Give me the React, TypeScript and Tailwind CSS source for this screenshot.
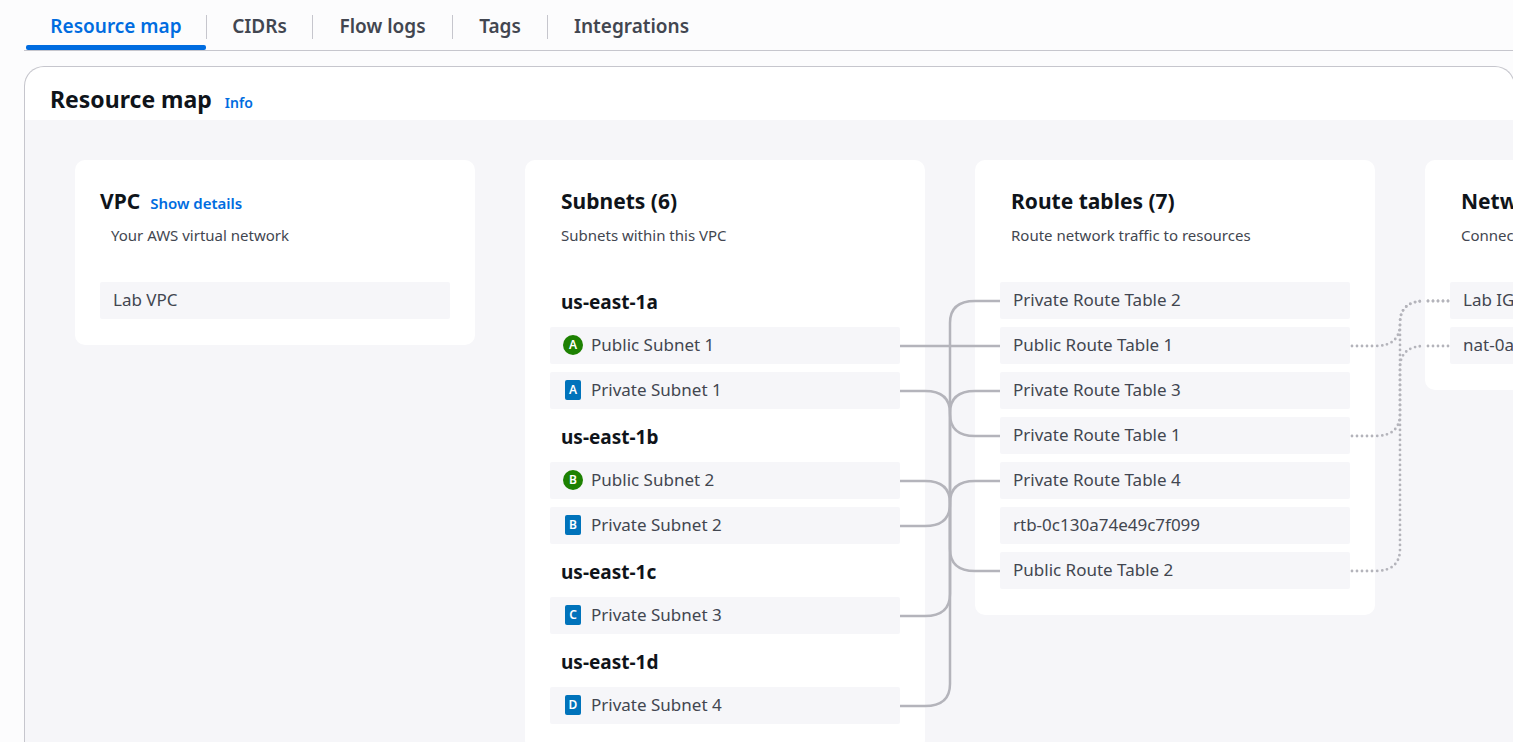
import type { ReactNode } from "react";

const tabs = [
  { label: "Resource map", width: "w-[181px]" },
  { label: "CIDRs", width: "w-[106px]" },
  { label: "Flow logs", width: "w-[140px]" },
  { label: "Tags", width: "w-[95px]" },
  { label: "Integrations", width: "w-[167px]" },
];

const zones = [
  {
    name: "us-east-1a",
    letter: "A",
    subnets: [
      { name: "Public Subnet 1", open: true },
      { name: "Private Subnet 1", open: false },
    ],
  },
  {
    name: "us-east-1b",
    letter: "B",
    subnets: [
      { name: "Public Subnet 2", open: true },
      { name: "Private Subnet 2", open: false },
    ],
  },
  { name: "us-east-1c", letter: "C", subnets: [{ name: "Private Subnet 3", open: false }] },
  { name: "us-east-1d", letter: "D", subnets: [{ name: "Private Subnet 4", open: false }] },
];

const routeTables = [
  "Private Route Table 2",
  "Public Route Table 1",
  "Private Route Table 3",
  "Private Route Table 1",
  "Private Route Table 4",
  "rtb-0c130a74e49c7f099",
  "Public Route Table 2",
];

/* Each pair holds the row slots (45px apart) that a connector joins. */
const subnetLinks = [
  [1, 1],
  [2, 3],
  [4, 6],
  [5, 0],
  [7, 2],
  [9, 4],
];
const networkLinks = [
  [1, 0],
  [3, 1],
  [6, 0],
];

const slotY = (slot: number) => 181 + slot * 45;

function bend(left: number, y1: number, y2: number) {
  const mid = left + 50;
  if (y1 === y2) return `H${mid + 25}`;
  const dir = y2 > y1 ? 22 : -22;
  return `H${mid - 25} Q${mid} ${y1} ${mid} ${y1 + dir} V${y2 - dir} Q${mid} ${y2} ${mid + 25} ${y2}`;
}

function Connectors() {
  return (
    <svg
      aria-hidden="true"
      className="pointer-events-none absolute left-0 top-0 h-[680px] w-[1450px]"
      fill="none"
      stroke="#b4b4bb"
      strokeWidth="2.5"
    >
      {subnetLinks.map(([a, b]) => (
        <path key={`s${a}`} d={`M875 ${slotY(a)} ${bend(875, slotY(a), slotY(b))} H975`} />
      ))}
      <g strokeWidth="2.8" strokeLinecap="round" strokeDasharray="0 5">
        {networkLinks.map(([a, b]) => (
          <path
            key={`n${a}`}
            d={`M1327 ${slotY(a)} ${bend(1325, slotY(a), slotY(b))} M1423 ${slotY(b)} H1402`}
          />
        ))}
      </g>
    </svg>
  );
}

function Card({
  title,
  description,
  link,
  children,
}: {
  title: string;
  description: string;
  link?: string;
  children: ReactNode;
}) {
  return (
    <section className="w-[400px] shrink-0 rounded-[10px] bg-white px-[25px] pb-[26px] pt-[25px]">
      <div className={link ? "flex items-baseline gap-[10px]" : "flex items-baseline pl-[11px]"}>
        <h3 className="text-[21px] font-bold leading-8 text-[#0f141a]">{title}</h3>
        {link && (
          <a href="#details" className="text-[15px] font-semibold leading-5 text-[#006ce0]">
            {link}
          </a>
        )}
      </div>
      <p className="mb-9 mt-[7px] pl-[11px] text-[15px] leading-[22px]">{description}</p>
      <div className="flex flex-col gap-2">{children}</div>
    </section>
  );
}

function Row({ children }: { children: ReactNode }) {
  return (
    <div className="flex h-[37px] items-center gap-2 whitespace-nowrap rounded-[2px] bg-[#f6f6f9] px-[13px] pb-[2px] text-[17px] leading-6">
      {children}
    </div>
  );
}

function Badge({ letter, open }: { letter: string; open: boolean }) {
  return (
    <span className="flex w-5 justify-center">
      <span
        className={
          open
            ? "flex h-5 w-5 items-center justify-center rounded-full bg-[#1d8102] text-xs font-semibold text-white"
            : "flex h-5 w-4 items-center justify-center rounded-[2px] bg-[#0073bb] text-xs font-semibold text-white"
        }
      >
        {letter}
      </span>
    </span>
  );
}

export default function App() {
  return (
    <div className="flex h-screen flex-col overflow-hidden bg-[#fcfcfd] pl-6 font-['Noto_Sans',sans-serif] text-[#424650]">
      <nav role="tablist" className="flex shrink-0 border-b border-[#c6c6cd] pl-[2px]">
        {tabs.map(({ label, width }, i) => (
          <div key={label} className={`relative flex h-[50px] shrink-0 items-start pt-[15px] ${width}`}>
            <button
              type="button"
              role="tab"
              aria-selected={i === 0}
              className={
                i === 0
                  ? "h-6 flex-1 pb-[2px] text-[19px] font-semibold leading-[22px] text-[#006ce0]"
                  : "h-6 flex-1 pb-[2px] text-[19px] font-semibold leading-[22px]"
              }
            >
              {label}
            </button>
            {i < tabs.length - 1 && <span className="h-6 w-px bg-[#c6c6cd]" />}
            {i === 0 && (
              <span className="absolute bottom-0 left-0 right-px h-[5px] rounded-[2px] bg-[#006ce0]" />
            )}
          </div>
        ))}
      </nav>

      <main className="-mr-[2px] mt-[15px] flex flex-1 flex-col overflow-hidden rounded-t-[20px] border border-b-0 border-[#c6c6cd] bg-white">
        <header className="flex shrink-0 items-baseline gap-[13px] pb-[7px] pl-[25px] pt-[18px]">
          <h2 className="text-[23px] font-bold leading-7 text-[#0f141a]">Resource map</h2>
          <a href="#info" className="text-[14px] font-semibold leading-5 text-[#006ce0]">
            Info
          </a>
        </header>

        <div className="relative flex flex-1 items-start gap-[50px] bg-[#f6f6f9] px-[50px] pt-10">
          <Card title="VPC" link="Show details" description="Your AWS virtual network">
            <Row>Lab VPC</Row>
          </Card>

          <Card title="Subnets (6)" description="Subnets within this VPC">
            {zones.map((zone) => (
              <div key={zone.name} className="flex flex-col gap-2">
                <h4 className="h-[37px] pl-[11px] pt-1 text-[19px] font-bold leading-[33px] text-[#0f141a]">
                  {zone.name}
                </h4>
                {zone.subnets.map((subnet) => (
                  <Row key={subnet.name}>
                    <Badge letter={zone.letter} open={subnet.open} />
                    {subnet.name}
                  </Row>
                ))}
              </div>
            ))}
          </Card>

          <Card title="Route tables (7)" description="Route network traffic to resources">
            {routeTables.map((name) => (
              <Row key={name}>{name}</Row>
            ))}
          </Card>

          <Card title="Network connections (2)" description="Connections to other networks">
            <Row>Lab IGW</Row>
            <Row>nat-0a</Row>
          </Card>

          <Connectors />
        </div>
      </main>
    </div>
  );
}
